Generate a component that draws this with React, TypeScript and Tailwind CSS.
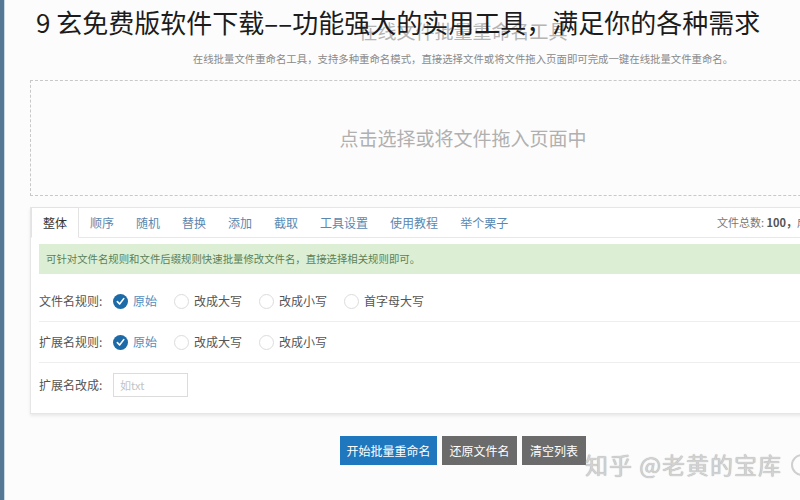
import React from "react";

const tabs = ["整体", "顺序", "随机", "替换", "添加", "截取", "工具设置", "使用教程", "举个栗子"];

function Radio({ checked, label }: { checked?: boolean; label: string }) {
  return (
    <label className="flex items-center gap-[5px] mr-[17px]">
      {checked ? (
        <span className="w-[15px] h-[15px] rounded-full bg-[#1d6aa8] flex items-center justify-center">
          <svg width="9" height="9" viewBox="0 0 10 10" fill="none">
            <path d="M1.5 5.2 L4 7.8 L8.6 1.8" stroke="white" strokeWidth="1.8" strokeLinecap="round" strokeLinejoin="round" />
          </svg>
        </span>
      ) : (
        <span className="w-[15px] h-[15px] rounded-full border border-[#dcdcdc] bg-white" />
      )}
      <span className={checked ? "text-[#4f8fc0]" : "text-[#555]"}>{label}</span>
    </label>
  );
}

function RuleRow({ label, options, last }: { label: string; options: string[]; last?: boolean }) {
  return (
    <div className={"flex items-center h-[41px] " + (last ? "" : "border-b border-[#eeeeee]")}>
      <span className="w-[74px] text-[#555]">{label}</span>
      {options.map((o, i) => (
        <Radio key={o} checked={i === 0} label={o} />
      ))}
    </div>
  );
}

export default function App() {
  return (
    <div
      className="relative w-[800px] h-[500px] overflow-hidden bg-[#fcfcfc] flex"
      style={{ fontFamily: '"Noto Sans CJK SC", "Noto Sans", sans-serif' }}
    >
      <div className="w-[5px] shrink-0 bg-[#557894] border-r border-[#c9d9e6]" />

      <div className="shrink-0 w-[866px] ml-[25px] flex flex-col">
        <div className="h-[80px] flex flex-col items-center">
          <div className="mt-[19px] text-[19px] leading-[24px] text-[#b5b5b5]">在线文件批量重命名工具</div>
          <div className="mt-[9px] text-[10.4px] leading-[14px] text-[#8a8a8a]">
            在线批量文件重命名工具，支持多种重命名模式，直接选择文件或将文件拖入页面即可完成一键在线批量文件重命名。
          </div>
        </div>

        <div className="h-[116px] border border-dashed border-[#c8c8c8] flex items-center justify-center">
          <span className="text-[19px] text-[#b0b0b0]">点击选择或将文件拖入页面中</span>
        </div>

        <div className="mt-[11px] bg-white border border-[#e6e6e6] shadow-[0_2px_3px_rgba(0,0,0,0.08)] pb-[6px]">
          <div className="flex items-end h-[30px] border-b border-[#e8e8e8] text-[12px]">
            {tabs.map((t, i) => (
              <div
                key={t}
                className={
                  "h-[31px] -mb-px flex items-center px-[11px] " +
                  (i === 0
                    ? "bg-white border border-[#e3e3e3] border-b-white text-[#333] px-[10px]"
                    : "text-[#5a88b0]")
                }
              >
                {t}
              </div>
            ))}
            <div className="flex-1" />
            <div className="self-center w-[178px] text-[11px] text-[#777] flex whitespace-nowrap">
              文件总数:&nbsp;<b className="text-[#555] font-bold">100，</b>
              <span>成功：0</span>
            </div>
          </div>

          <div className="mx-[8px] mt-[6px] h-[30px] bg-[#dcefd4] flex items-center px-[7px] text-[10.4px] text-[#5b7f58]">
            可针对文件名规则和文件后缀规则快速批量修改文件名，直接选择相关规则即可。
          </div>

          <div className="mx-[8px] mt-[7px] text-[12px]">
            <RuleRow label="文件名规则:" options={["原始", "改成大写", "改成小写", "首字母大写"]} />
            <RuleRow label="扩展名规则:" options={["原始", "改成大写", "改成小写"]} />
            <div className="flex items-center h-[44px]">
              <span className="w-[74px] text-[#555]">扩展名改成:</span>
              <div className="w-[75px] h-[24px] border border-[#dcdcdc] bg-white flex items-center px-[6px] text-[11px] text-[#c4c4c4]">
                如txt
              </div>
            </div>
          </div>
        </div>

        <div className="mt-[22px] flex justify-center gap-[5px] text-[12px] text-white">
          <div className="w-[97px] h-[29px] bg-[#1f77bd] flex items-center justify-center">开始批量重命名</div>
          <div className="w-[75px] h-[29px] bg-[#6b6b6b] flex items-center justify-center">还原文件名</div>
          <div className="w-[64px] h-[29px] bg-[#6b6b6b] flex items-center justify-center">清空列表</div>
        </div>
      </div>

      <div className="absolute left-[36px] top-[5px] text-[26px] leading-[34px] text-[#1c1c1c] whitespace-nowrap">
        9 玄免费版软件下载––功能强大的实用工具，满足你的各种需求
      </div>

      <div
        className="absolute left-[585px] top-[449px] text-[23px] leading-[30px] text-[#d2d2d2] whitespace-nowrap tracking-[1px]"
        style={{ textShadow: "0 0 1px #9a9a9a" }}
      >
        知乎 @老黄的宝库
      </div>
      <div className="absolute left-[791px] top-[454px] w-[22px] h-[22px] rounded-full border-2 border-[#cfcfcf]" />
    </div>
  );
}
